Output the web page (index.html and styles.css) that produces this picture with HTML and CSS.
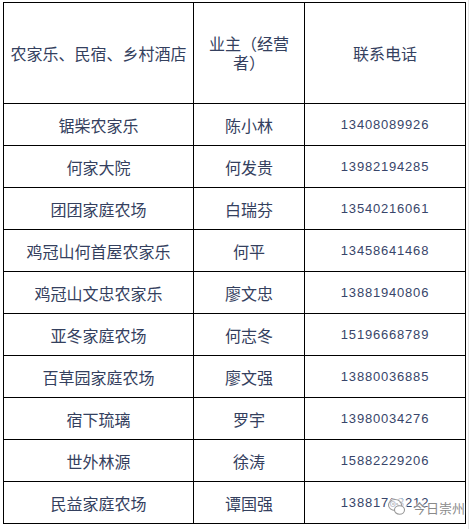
FILE: index.html
```html
<!DOCTYPE html>
<html lang="zh-CN">
<head>
<meta charset="utf-8">
<link rel="stylesheet" href="styles.css">
</head>
<body>
<div class="sheet">
  <table class="grid">
    <colgroup>
      <col class="c1"><col class="c2"><col class="c3">
    </colgroup>
    <tr class="head">
      <td>农家乐、民宿、乡村酒店</td>
      <td class="owner-h">业主（经营者）</td>
      <td>联系电话</td>
    </tr>
    <tr><td>锯柴农家乐</td><td>陈小林</td><td class="num">13408089926</td></tr>
    <tr><td>何家大院</td><td>何发贵</td><td class="num">13982194285</td></tr>
    <tr><td>团团家庭农场</td><td>白瑞芬</td><td class="num">13540216061</td></tr>
    <tr><td>鸡冠山何首屋农家乐</td><td>何平</td><td class="num">13458641468</td></tr>
    <tr><td>鸡冠山文忠农家乐</td><td>廖文忠</td><td class="num">13881940806</td></tr>
    <tr><td>亚冬家庭农场</td><td>何志冬</td><td class="num">15196668789</td></tr>
    <tr><td>百草园家庭农场</td><td>廖文强</td><td class="num">13880036885</td></tr>
    <tr><td>宿下琉璃</td><td>罗宇</td><td class="num">13980034276</td></tr>
    <tr><td>世外林源</td><td>徐涛</td><td class="num">15882229206</td></tr>
    <tr><td>民益家庭农场</td><td>谭国强</td><td class="num">13881763212</td></tr>
  </table>
  <div class="watermark">
    <svg class="wm-icon" width="20" height="20" viewBox="0 0 20 20" aria-hidden="true">
      <ellipse cx="8" cy="8" rx="6.5" ry="5.5" fill="none" stroke="#9a9a9a" stroke-width="1.1"/>
      <ellipse cx="12.5" cy="13" rx="5" ry="4.2" fill="#fff" stroke="#9a9a9a" stroke-width="1.1"/>
      <circle cx="6" cy="7" r="0.8" fill="#9a9a9a"/>
      <circle cx="10" cy="7" r="0.8" fill="#9a9a9a"/>
    </svg>
    <span class="wm-text">今日崇州</span>
  </div>
  <div class="edge"></div>
</div>
</body>
</html>
```

FILE: styles.css
```css
html, body {
  margin: 0;
  padding: 0;
  background: #ffffff;
}

.sheet {
  position: relative;
  width: 471px;
  height: 529px;
  padding: 2px 0 0 3px;
  box-sizing: border-box;
}

.grid {
  border-collapse: collapse;
  table-layout: fixed;
  width: 462px;
  font-family: "Noto Sans CJK SC", "Noto Sans", sans-serif;
  font-size: 16px;
  color: #34405e;
}

.c1 { width: 190px; }
.c2 { width: 111px; }
.c3 { width: 161px; }

.grid td {
  border: 1px solid #000;
  height: 41px;
  padding: 0 4px;
  text-align: center;
  vertical-align: middle;
  line-height: 18px;
  white-space: nowrap;
}

.grid .head td {
  height: 100px;
}

.grid .head td.owner-h {
  white-space: normal;
  padding: 0 14px;
  line-height: 19px;
}

.grid td.num {
  font-family: "Liberation Sans", sans-serif;
  font-size: 13px;
  letter-spacing: 0.8px;
  color: #38456a;
}

.watermark {
  position: absolute;
  left: 387px;
  top: 497px;
  display: flex;
  align-items: center;
  gap: 6px;
}

.wm-icon {
  background: rgba(255, 255, 255, 0.7);
  border-radius: 50%;
}

.wm-text {
  font-family: "Noto Sans CJK SC", sans-serif;
  font-size: 13px;
  color: #8a8a8a;
  text-shadow: 0 0 2px #fff, 0 0 3px #fff;
}

.edge {
  position: absolute;
  left: 468px;
  top: 0;
  width: 0;
  height: 529px;
  border-left: 1px solid #e4e4e4;
}
```
